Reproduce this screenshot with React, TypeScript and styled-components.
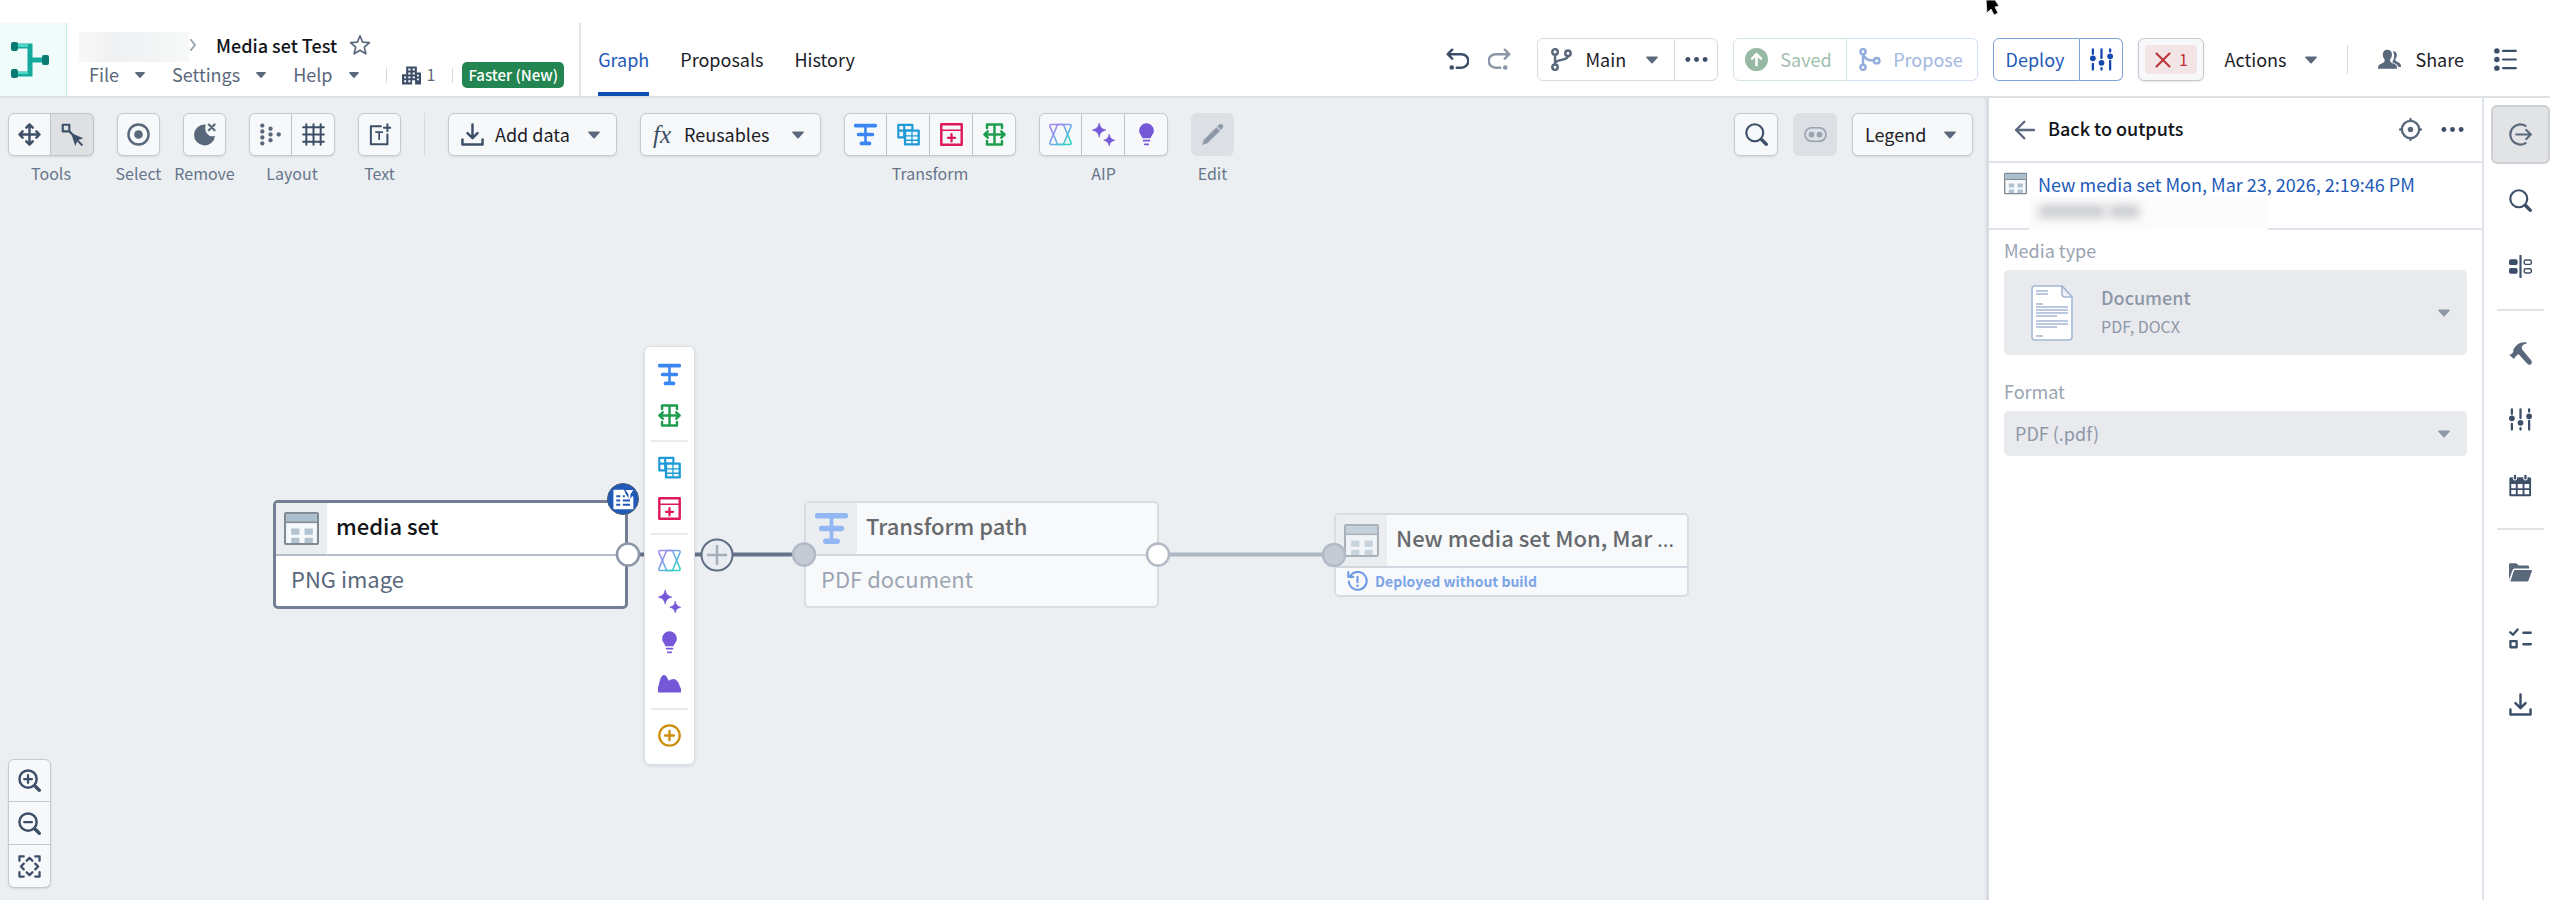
import React from "react";
import styled, { createGlobalStyle, css } from "styled-components";

const ink = "#5a687c";
const navy = "#3d4f68";
const blue = "#2159b8";

const GlobalStyle = createGlobalStyle`
  *, *::before, *::after { box-sizing: border-box; }
  body {
    margin: 0;
    background: #ffffff;
    color: #1c2127;
    font-family: "Noto Sans CJK SC", "Open Sans", sans-serif;
    font-size: 18px;
    line-height: 24px;
  }
  button, select { font: inherit; color: inherit; margin: 0; cursor: pointer; }
  button:disabled, select:disabled { cursor: default; }
  svg { display: block; flex: none; }
`;

/* ---------- icons ---------- */

type IconProps = { size?: number; color?: string; children?: React.ReactNode };

const Icon = ({ size = 23, color = ink, children }: IconProps) => (
  <svg width={size} height={size} viewBox="0 0 16 16" fill="none" color={color} stroke="currentColor" strokeWidth="1.7" strokeLinecap="round" strokeLinejoin="round" aria-hidden="true">
    {children}
  </svg>
);

const fillOnly = { fill: "currentColor", stroke: "none" };

const Caret = ({ color = ink, size = 12 }: { color?: string; size?: number }) => (
  <svg width={size} height="8" viewBox="0 0 12 8" fill={color} aria-hidden="true">
    <path d="M.9.5h10.2c.7 0 1 .8.5 1.300L6.600 7.200a.9.9 0 0 1-1.200 0L.4 1.800C-.1 1.300.2.5.9.5z" />
  </svg>
);

const MoveIcon = () => (
  <Icon color={navy}><path d="M8 1.200v13.600M1.200 8h13.600M5.800 3.200L8 1l2.200 2.200M5.800 12.800L8 15l2.200-2.200M3.200 5.800L1 8l2.200 2.200M12.800 5.800L15 8l-2.200 2.200" /></Icon>
);
const SelectToolIcon = () => (
  <Icon color={navy}><path d="M1.200 1.200h4.600v4.600H1.200zM6 6l3 3" strokeWidth="1.500" /><path d="M7 7l8.500 3.600-3.400 1.300 3.300 3.200-1 1-3.200-3.200L9.900 16z" {...fillOnly} /></Icon>
);
const SelectIcon = () => (
  <Icon><circle cx="8" cy="8" r="7" /><circle cx="8" cy="8" r="3" {...fillOnly} /></Icon>
);
const RemoveIcon = () => (
  <Icon><path d="M8 1a7.300 7.300 0 1 0 7.300 7.800c-1.600.7-3.400.6-4.700-.6C8.500 6.400 8 3.500 9 1.100A7 7 0 0 0 8 1z" {...fillOnly} /><path d="M11 1l4 4M15 1l-4 4" strokeWidth="1.500" /></Icon>
);
const LayoutIcon = () => (
  <Icon><g {...fillOnly}>
    {[[2.300, 1.800], [2.300, 5.900], [2.300, 10.100], [2.300, 14.200], [8, 4], [8, 8], [8, 12], [13.700, 8]].map(([x, y]) => <circle key={`${x}-${y}`} cx={x} cy={y} r="1.500" />)}
  </g></Icon>
);
const GridIcon = () => (
  <Icon color={navy}><path d="M3 .8v14.400M8 .8v14.400M13 .8v14.400M.8 3h14.400M.8 8h14.400M.8 13h14.400" strokeWidth="1.400" /></Icon>
);
const TextIcon = () => (
  <Icon color={navy}><path d="M9 2.300H2v12.400h11.500V8M13.500.8v5M11 3.300h5" strokeWidth="1.400" /><path d="M5.500 6.300h4.500M7.750 6.300v5" strokeWidth="1.200" /></Icon>
);
const ImportIcon = ({ size = 23 }: { size?: number }) => (
  <Icon size={size} color={navy}><path d="M8 1v9M4.500 7L8 10.500 11.500 7M1 11.500V15h14v-3.500" strokeWidth="1.700" /></Icon>
);
const TransformIcon = ({ size = 23, color = "#3a86f2" }: { size?: number; color?: string }) => (
  <Icon size={size} color={color}><path d="M1.200 1.800h13.600M3.200 8h9.600M5.200 14.200h5.600" strokeWidth="2.600" /><path d="M8 2v12" strokeWidth="1.800" /></Icon>
);
const JoinIcon = () => (
  <Icon color="#1e9bd7"><path d="M.9 1.300h9.800v8.700H.9zM.9 5.300h9.800M5 1.300v8.700" strokeWidth="1.500" /><path d="M5.600 5.300h9.500v9.600H5.600z" fill="#f7fafc" strokeWidth="1.600" /><path d="M5.600 9h9.500M10.400 5.300v9.600M5.600 12h9.500" strokeWidth=".9" /></Icon>
);
const AddTableIcon = () => (
  <Icon color="#dc1a5c"><path d="M.9.9h14.200v14.200H.9z" strokeWidth="1.700" /><path d="M1 5h14" strokeWidth="1" /><path d="M8 7.800v5M5.500 10.300h5" strokeWidth="1.600" /></Icon>
);
const SplitIcon = () => (
  <Icon color="#1f9d4f"><path d="M2.800 3.500V1h10.400v2.500M2.800 12.500V15h10.400v-2.500M8 1v14M1 8h14M3.300 5.800L1 8l2.300 2.200M12.700 5.800L15 8l-2.300 2.200" strokeWidth="1.700" /></Icon>
);
const AipIcon = ({ id }: { id: string }) => (
  <Icon>
    <defs><linearGradient id={id} x1="0" y1="0" x2="1" y2="1"><stop offset="0.200" stopColor="#9a8cf2" /><stop offset="0.500" stopColor="#6fa8ea" /><stop offset="0.850" stopColor="#35cfc4" /></linearGradient></defs>
    <g stroke={`url(#${id})`} strokeWidth="1.100">
      <path d="M1.800 1h8.200l5.300 12.500c.3.900-.2 1.500-1.100 1.500H6L.7 2.500C.4 1.600.9 1 1.800 1z" />
      <path d="M14.200 1H6L.7 13.500c-.3.900.2 1.500 1.100 1.500H10l5.300-12.500c.3-.9-.2-1.500-1.100-1.500z" />
    </g>
  </Icon>
);
const SparkleIcon = () => (
  <Icon color="#7458d8"><path d="M5 0c.6 3 1.700 4.100 4.600 4.900C6.700 5.700 5.600 6.800 5 9.800 4.400 6.800 3.200 5.700.3 4.900 3.200 4.100 4.400 3 5 0zM12 8c.5 2.400 1.400 3.300 3.800 4-2.400.6-3.300 1.500-3.800 3.900-.5-2.400-1.400-3.300-3.800-3.900C10.600 11.300 11.500 10.400 12 8z" fill="currentColor" strokeWidth=".5" /></Icon>
);
const BulbIcon = () => (
  <Icon color="#7458d8"><path d="M8 .2a5.100 5.100 0 0 0-5.100 5.200c0 2.400 2 3.400 2.200 5.200h5.800c.2-1.800 2.200-2.800 2.200-5.200A5.100 5.100 0 0 0 8 .2z" {...fillOnly} /><path d="M6 12.300h4M6.800 14.800h2.400" strokeWidth="1.200" /></Icon>
);
const AreaIcon = () => (
  <Icon color="#7458d8"><path d="M0 14.200V11c1-3 1.300-7.500 3.500-8.700 2-.8 2.800 1.800 4 3.700 1.500-.7 3.500-1.800 5.300-.3C14.800 7.400 15 10 16 11.500v2.700z" {...fillOnly} /></Icon>
);
const AddCircleIcon = () => (
  <Icon color="#cc8f0b"><circle cx="8" cy="8" r="7.100" strokeWidth="1.600" /><path d="M8 4.900v6.200M4.900 8h6.200" /></Icon>
);
const EditIcon = () => (
  <Icon color="#8d97a7"><path d="M10.700 3.300l2.300 2.200L4.500 13.800 1 15l1.300-3.400zM11.600 2.300c1.300-1.500 2.300-1.900 3.200-1s.5 2-.9 3.300z" fill="currentColor" strokeWidth=".4" /></Icon>
);
const SearchIcon = () => (
  <Icon color={navy}><circle cx="6.800" cy="6.800" r="5.900" strokeWidth="1.500" /><path d="M11.500 11.500l3.300 3.300" strokeWidth="2.300" /></Icon>
);
const ZoomIcon = ({ plus }: { plus?: boolean }) => (
  <Icon color={navy}><circle cx="7" cy="7" r="6" strokeWidth="1.700" /><path d={plus ? "M7 4.300v5.400M4.300 7h5.400" : "M4.300 7h5.400"} strokeWidth="1.600" /><path d="M11.800 11.800l3 3" strokeWidth="2.300" /></Icon>
);
const FitIcon = () => (
  <Icon color={navy}><path d="M1 4V1h3M12 1h3v3M15 12v3h-3M4 15H1v-3M6 4l2-2 2 2M6 12l2 2 2-2M4 6L2 8l2 2M12 6l2 2-2 2" strokeWidth="1.600" /></Icon>
);
const RobotIcon = () => (
  <Icon color="#98a2b1"><rect x=".7" y="3.300" width="14.600" height="9.400" rx="4.700" strokeWidth="1.200" /><circle cx="5.200" cy="8" r="2" {...fillOnly} /><circle cx="10.800" cy="8" r="2" {...fillOnly} /></Icon>
);
const UndoIcon = () => (
  <Icon color={navy}><path d="M4.300 1.200L1.200 4.300l3.100 3.100M1.500 4.300h9.300a4.100 4.100 0 0 1 0 9.400H7.500" /><circle cx="4" cy="13.600" r="1.600" {...fillOnly} /></Icon>
);
const RedoIcon = () => (
  <Icon color="#8d97a7"><path d="M11.700 1.200l3.100 3.100-3.100 3.100M14.500 4.300H5.200a4.100 4.100 0 0 0 0 9.400h3.300" /><circle cx="12" cy="13.600" r="1.600" {...fillOnly} /></Icon>
);
const BranchIcon = () => (
  <Icon><circle cx="3.500" cy="2.700" r="1.900" /><circle cx="3.500" cy="13.300" r="1.900" /><circle cx="12.500" cy="3.700" r="1.900" /><path d="M3.500 4.600v6.800M12.500 5.600C12.500 9.500 3.500 7 3.500 11" /></Icon>
);
const ProposeIcon = () => (
  <Icon color="#93aedd"><circle cx="3.500" cy="2.600" r="1.800" /><circle cx="3.500" cy="13.400" r="1.800" /><circle cx="13" cy="8.800" r="1.900" /><path d="M3.500 4.600v6.800M3.700 4.600C4.500 7.500 7 8.800 11 8.800" /></Icon>
);
const SavedIcon = () => (
  <Icon color="#97b8a4"><circle cx="8" cy="8" r="8" {...fillOnly} /><path d="M8 12V4.500M4.900 7.400L8 4.300l3.100 3.100" stroke="#fff" strokeWidth="1.800" /></Icon>
);
const DotsIcon = () => (
  <Icon color={navy}><g {...fillOnly}><circle cx="2" cy="8" r="1.700" /><circle cx="8" cy="8" r="1.700" /><circle cx="14" cy="8" r="1.700" /></g></Icon>
);
const SlidersIcon = ({ color = navy }: { color?: string }) => (
  <Icon color={color}><path d="M2 1v3M2 11v4M8 1v6M8 14v1M14 1v1.500M14 9v6" strokeWidth="1.600" /><g {...fillOnly}><circle cx="2" cy="7.200" r="2" /><circle cx="8" cy="10.300" r="2" /><circle cx="14" cy="5.800" r="2" /></g></Icon>
);
const CrossIcon = () => (
  <Icon size={16} color="#bd3038"><path d="M1.500 1.500l13 13M14.500 1.500l-13 13" strokeWidth="2" /></Icon>
);
const PeopleIcon = () => (
  <Icon><path d="M6.500 1.200c2 0 3.200 1.400 3.200 3.300 0 1.500-.6 2.700-1.300 3.500v1.300c.4 1.200 4 1.700 4.600 3.300.2.700.2 1.400.2 1.900H0c0-.5 0-1.200.3-1.900.6-1.600 4-2.100 4.300-3.300V8C4 7.200 3.300 6 3.300 4.500c0-1.900 1.200-3.300 3.200-3.300z" {...fillOnly} /><path d="M10.300 2.300c1.800-.1 2.800 1 2.800 2.600 0 1.100-.4 2-1 2.700v1c.3.900 3.200 1.600 3.700 2.900.2.500.2 1.200.2 1.700h-1.700c-.6-1.700-3-2.500-4.400-3.400.8-1.100 1.300-2.400 1.300-4.200 0-1.200-.3-2.400-.9-3.300z" {...fillOnly} /></Icon>
);
const ListIcon = () => (
  <Icon color={navy}><path d="M6.300 2h8.900M6.300 8h8.900M6.300 14h8.900" strokeWidth="1.500" /><g {...fillOnly}><circle cx="2" cy="2" r="1.900" /><circle cx="2" cy="8" r="1.900" /><circle cx="2" cy="14" r="1.900" /></g></Icon>
);
const StarIcon = () => (
  <Icon size={22}><path d="M8 1.300l1.900 4.600 5 .4-3.800 3.200 1.200 4.900L8 11.800l-4.300 2.600 1.200-4.900L1.100 6.300l5-.4z" strokeWidth="1.200" /></Icon>
);
const ChevronIcon = () => (
  <svg width="8" height="12" viewBox="0 0 8 12" fill="none" stroke="#98a4b5" strokeWidth="2" strokeLinecap="round" strokeLinejoin="round" aria-hidden="true"><path d="M2 1l4 5-4 5" /></svg>
);
const BuildingIcon = () => (
  <Icon size={19} color={navy}><path d="M3.500.5h9v5H16v10h-5V12H8.500v3.500H0V7h3.500z" {...fillOnly} /><g fill="#fff" stroke="none"><path d="M5.300 2.200h1.800v1.600H5.300zM9 2.200h1.800v1.600H9zM5.300 5.500h1.800v1.600H5.300zM9 5.500h1.800v1.600H9zM5.300 8.800h1.800v1.600H5.300zM9 8.800h1.800v1.600H9zM12.600 7.300h1.600v1.600h-1.600zM12.600 10.500h1.600v1.600h-1.600zM1.800 8.800h1.700v1.600H1.800zM1.800 12h1.700v1.600H1.800zM5.300 12h1.800v1.600H5.300z" /></g></Icon>
);
const BackIcon = () => (
  <Icon size={22} color={ink}><path d="M14.500 8H1.500M7.500 2L1.500 8l6 6" strokeWidth="1.700" /></Icon>
);
const TargetIcon = () => (
  <Icon><circle cx="8" cy="8" r="6" strokeWidth="1.600" /><circle cx="8" cy="8" r="1.900" {...fillOnly} /><path d="M8 .8V2M8 14v1.200M.8 8H2M14 8h1.200" /></Icon>
);
const TableIcon = ({ size = 23, faded }: { size?: number; faded?: boolean }) => (
  <svg width={size} height={size} viewBox="0 0 34 34" opacity={faded ? 0.6 : 1} aria-hidden="true">
    <rect x="1" y="2" width="32" height="30" rx="1" fill="#f5f9fc" stroke="#7f8a94" strokeWidth="2" />
    <path d="M2 3h30v8H2z" fill="#abbecb" /><path d="M2 11h30" stroke="#7f8a94" strokeWidth="1.500" />
    <path d="M7 17h8v6H7zM20 17h8v6h-8zM7 26h8v5H7zM20 26h8v5h-8z" fill="#b2c2cf" />
  </svg>
);
const OutputIcon = () => (
  <Icon><path d="M11.500 2A7 7 0 1 0 11.500 14M5 8h10M12 4.800L15.200 8 12 11.200" strokeWidth="1.500" /></Icon>
);
const CompareIcon = () => (
  <Icon color={navy}><path d="M8 .5v15" strokeWidth="1.500" /><rect x="0" y="3" width="6" height="4" rx="1.300" {...fillOnly} /><rect x="0" y="9" width="6" height="4" rx="1.300" {...fillOnly} /><rect x="10.600" y="3.500" width="4.900" height="3" rx="1" strokeWidth="1" /><rect x="10.600" y="9.500" width="4.900" height="3" rx="1" strokeWidth="1" /></Icon>
);
const HammerIcon = () => (
  <Icon><path d="M3.800 4C5.800 1.200 8.500 0 12.300.3c.2.500 0 .8-.6.9-1.700.4-2.800 1.300-2.900 2.600 0 .7.300 1.300.8 1.900l5.800 7c.8 1 .6 2.100-.1 2.700-.8.700-2 .5-2.700-.4L6.500 8.300 3.900 10.700c.1.500-.1.900-.5 1.200L.2 8.900c.3-.4.800-.5 1.300-.4L3 7c-.2-1.200.1-2.100.8-3z" {...fillOnly} /></Icon>
);
const CalendarIcon = () => (
  <Icon color={navy}><path d="M.9 3h13.800v11.800H.9zM1 6.300h13.600M1 10.500h13.600M5.400 6.300v8.500M10.100 6.300v8.500" strokeWidth="1.300" /><path d="M1 2.500h13.500v4H1z" {...fillOnly} /><g fill="currentColor" stroke="#fff" strokeWidth=".7"><rect x="3" y=".2" width="2.300" height="4" rx="1.100" /><rect x="10.300" y=".2" width="2.300" height="4" rx="1.100" /></g></Icon>
);
const FolderIcon = () => (
  <Icon><path d="M0 13V2.500C0 1.900.5 1.500 1 1.500h4L6.800 3.200H13c.6 0 1 .4 1 1v1H4.200c-.8 0-1.400.4-1.700 1.100z" {...fillOnly} /><path d="M4.200 6.300h11.200c.5 0 .7.400.5.900l-2.300 6.200c-.2.500-.6.900-1.200.9H.9l2.400-7.300c.1-.5.400-.7.900-.7z" {...fillOnly} /></Icon>
);
const ChecklistIcon = () => (
  <Icon color={navy}><path d="M.9 3.700l1.900 1.700L6 1.800M10 4h5.200M10 12h5.200M1 9.800h4.300v4.300H1z" strokeWidth="1.600" /></Icon>
);
const FilterDocIcon = () => (
  <Icon size={21} color="#fff"><path d="M.8 1h7.200l1.500 3.500L11 6.500V8h2.200l1.800-2v9H.8z" fill="#fff" strokeWidth="1" /><path d="M9.500.8h6L13.300 4v3l-1.500 1V4z" {...fillOnly} /><path d="M2.500 5.500h3M7.500 5.500h1.500M2.500 8.800h3M7.500 8.800h5.500M2.500 12h3M7.500 12h5.500" stroke={blue} strokeWidth="1.500" strokeLinecap="butt" /></Icon>
);
const DeployedIcon = () => (
  <Icon size={21} color="#6f9be6"><path d="M2.800 3.300A6.800 6.800 0 1 1 1.400 8M1 .8v3.700h3.700M8 4.500V8.500" strokeWidth="1.600" /><circle cx="8" cy="11.300" r="1" {...fillOnly} /></Icon>
);
const DocumentArt = () => (
  <svg width="42" height="56" viewBox="0 0 42 56" fill="#fff" stroke="#a5b8d6" strokeWidth="1.600" aria-hidden="true">
    <path d="M4 1h27l10 11v40a3 3 0 0 1-3 3H4a3 3 0 0 1-3-3V4a3 3 0 0 1 3-3z" />
    <path d="M31 1v8c0 2 1 3 3 3h7z" fill="#eef2f8" />
    <path d="M5 6h12M5 9h12M5 19h7M5 22h32M5 25h32M5 28h32M5 31h21M5 36h32M5 39h32M5 42h21M5 51h7" />
  </svg>
);

/* ---------- shared controls ---------- */

const Button = styled.button<{ $w?: number; $tone?: "plain" | "active" | "disabled" }>`
  display: flex;
  align-items: center;
  justify-content: center;
  width: ${(p) => p.$w ?? 43}px;
  height: 43px;
  padding: 0 16px 0 12px;
  border: 1px solid #c5c9cf;
  border-radius: 6px;
  background: #f7f8f9;
  box-shadow: 0 1px 2px rgba(17, 20, 24, 0.1);
  ${(p) => (p.$w ?? 43) < 80 && css`padding: 0;`}
  ${(p) => p.$tone === "active" && css`background: #dfe0e2; border-color: #c0c3c7;`}
  ${(p) => p.$tone === "disabled" && css`background: #dcdfe4; border-color: #dcdfe4; box-shadow: none;`}
`;

const ButtonGroup = styled.div<{ $vertical?: boolean }>`
  display: flex;
  flex-direction: ${(p) => (p.$vertical ? "column" : "row")};
  ${Button} + ${Button} {
    ${(p) => (p.$vertical ? "border-top: 0;" : "border-left: 0;")}
  }
  ${Button}:not(:first-child) {
    border-top-left-radius: 0;
    ${(p) => (p.$vertical ? "border-top-right-radius: 0;" : "border-bottom-left-radius: 0;")}
  }
  ${Button}:not(:last-child) {
    border-bottom-right-radius: 0;
    ${(p) => (p.$vertical ? "border-bottom-left-radius: 0;" : "border-top-right-radius: 0;")}
  }
`;

const HeaderButton = styled(Button)<{ $line?: string; $ink?: string }>`
  background: #ffffff;
  box-shadow: none;
  border-color: ${(p) => p.$line ?? "#d8dbe1"};
  color: ${(p) => p.$ink ?? "inherit"};
`;

const BareButton = styled.button<{ $gap?: number; $ink?: string }>`
  display: flex;
  align-items: center;
  gap: ${(p) => p.$gap ?? 0}px;
  padding: 0;
  border: 0;
  background: none;
  color: ${(p) => p.$ink ?? "inherit"};
`;

/* Text of a control; the face sits low in its line box, so it is lifted to the icon's centre line. */
const Text = styled.span<{ $l?: number; $fill?: boolean }>`
  padding-bottom: 2px;
  margin-left: ${(p) => p.$l ?? 0}px;
  margin-right: ${(p) => (p.$fill ? "auto" : "0")};
`;

const Rule = styled.span<{ $h: number }>`
  flex: none;
  width: 1px;
  height: ${(p) => p.$h}px;
  background: #d5dae0;
`;

/* ---------- page frame ---------- */

const Page = styled.div`
  display: flex;
  flex-direction: column;
  min-height: 100vh;
`;

const Header = styled.header`
  display: flex;
  align-items: stretch;
  padding-top: 23px;
  border-bottom: 2px solid #dce1e6;
`;

const LogoCell = styled.div`
  display: flex;
  align-items: center;
  width: 67px;
  padding-left: 11px;
  background: #effcfa;
  border-right: 1px solid #c3eee9;
`;

const TitleBlock = styled.div`
  padding: 9px 15px 8px 12px;
  border-right: 2px solid #e0e3e8;
`;

const Breadcrumb = styled.div`
  display: flex;
  align-items: center;
  height: 30px;
`;

const Redaction = styled.span`
  width: 110px;
  height: 30px;
  background: linear-gradient(90deg, #f8f8f9, #f0f1f2 30%, #f3f4f5 70%, #f8f9f9);
`;

const Title = styled.h1`
  margin: 0 12px 4px 19px;
  font-size: 18px;
  line-height: 24px;
  font-weight: 500;
  color: #111418;
`;

const Crumb = styled.span`
  display: flex;
  padding-bottom: 4px;
`;

const MenuRow = styled.div`
  display: flex;
  align-items: center;
  height: 26px;
  padding-left: 10px;
  color: ${ink};
`;

const Menu = styled(BareButton)`
  gap: 16px;
  margin-right: 27px;
`;

const Instances = styled.span`
  display: flex;
  align-items: center;
  gap: 6px;
  margin: 0 17px 0 15px;
  font-size: 16px;
`;

const Tag = styled.span`
  margin-left: 9px;
  padding: 0 6px;
  border-radius: 5px;
  background: #238551;
  color: #ffffff;
  font-size: 15px;
  line-height: 26px;
  font-weight: 500;
`;

const Tabs = styled.nav`
  display: flex;
  gap: 31px;
  padding-left: 17px;
`;

const Tab = styled.a<{ $on?: boolean }>`
  display: flex;
  align-items: center;
  padding-top: 2px;
  border-bottom: 4px solid ${(p) => (p.$on ? "#0f4fb3" : "transparent")};
  color: ${(p) => (p.$on ? blue : "#1c2127")};
  text-decoration: none;
`;

const HeaderTools = styled.div`
  display: flex;
  align-items: center;
  margin-left: auto;
  padding-right: 33px;
  gap: 15px;
`;

const History = styled.div`
  display: flex;
  gap: 19px;
  margin-right: 11px;
`;

const ErrorTag = styled.span`
  display: flex;
  align-items: center;
  justify-content: center;
  gap: 8px;
  width: 52px;
  height: 29px;
  flex: none;
  border-radius: 4px;
  background: #f3e4e6;
  color: #bd3038;
  font-size: 16px;
`;

const Account = styled.div`
  display: flex;
  align-items: center;
  gap: 30px;
  padding-left: 5px;
`;

const Body = styled.div`
  display: flex;
  flex: 1;
  align-items: stretch;
`;

/* ---------- canvas ---------- */

const Canvas = styled.main`
  position: relative;
  flex: 1;
  min-width: 0;
  background: #ebeff2;
  box-shadow: inset -4px 0 3px -2px #d4d9df;
`;

const Toolbar = styled.div`
  display: flex;
  align-items: flex-start;
  gap: 23px;
  padding: 15px 15px 0 8px;
`;

const ToolGroup = styled.div`
  display: grid;
`;

const ToolLabel = styled.span`
  margin: 6px -20px 0;
  text-align: center;
  font-size: 16px;
  line-height: 22px;
  color: #67758a;
`;

const ViewTools = styled.div`
  display: flex;
  gap: 15px;
  margin-left: auto;
`;

const Fx = styled.span`
  font-family: "Liberation Serif", serif;
  font-style: italic;
  font-size: 25px;
  color: ${navy};
`;

const ZoomControls = styled.div`
  position: absolute;
  left: 8px;
  bottom: 12px;
`;

const Edges = styled.svg`
  position: absolute;
  left: 0;
  top: 0;
`;

const Node = styled.article<{ $x: number; $y: number; $on?: boolean }>`
  position: absolute;
  left: ${(p) => p.$x}px;
  top: ${(p) => p.$y}px;
  width: 355px;
  border: ${(p) => (p.$on ? "3px solid #738094" : "2px solid #d8dce3")};
  border-radius: 5px;
  background: ${(p) => (p.$on ? "#ffffff" : "#f8f9fb")};
  color: ${(p) => (p.$on ? "#111418" : "#66696d")};
`;

const NodeHead = styled.div<{ $on?: boolean }>`
  display: flex;
  align-items: center;
  height: 53px;
  border-bottom: 2px solid ${(p) => (p.$on ? "#b3bccb" : "#d2d7df")};
`;

const NodeIcon = styled.div`
  display: flex;
  align-items: center;
  justify-content: center;
  flex: none;
  width: 51px;
  height: 51px;
  background: #ebeef1;
`;

const NodeTitle = styled.h2`
  margin: 0;
  padding: 0 0 7px 9px;
  font-size: 22px;
  line-height: 32px;
  font-weight: 500;
  white-space: nowrap;
`;

const Ellipsis = styled.span`
  font-family: "Open Sans", sans-serif;
`;

const NodeText = styled.p<{ $on?: boolean }>`
  margin: 0;
  padding: 6px 15px 12px;
  font-size: 22px;
  line-height: 32px;
  color: ${(p) => (p.$on ? ink : "#9ca5b3")};
`;

const NodeStatus = styled.p`
  display: flex;
  align-items: center;
  gap: 7px;
  height: 27px;
  margin: 0;
  padding-left: 11px;
  font-size: 14px;
  font-weight: 700;
  color: #7ba5e8;
`;

const Badge = styled.span`
  position: absolute;
  top: -20px;
  right: -14px;
  display: flex;
  align-items: center;
  justify-content: center;
  width: 32px;
  height: 32px;
  border: 1px solid #4a5b75;
  border-radius: 50%;
  background: ${blue};
`;

const Palette = styled.div`
  position: absolute;
  left: 645px;
  top: 249px;
  display: flex;
  flex-direction: column;
  align-items: center;
  width: 49px;
  padding: 7px 0 8px;
  border-radius: 5px;
  background: #ffffff;
  box-shadow: 0 0 0 1px #dadee3, 0 1px 4px rgba(17, 20, 24, 0.16);
`;

const PaletteButton = styled(BareButton)`
  justify-content: center;
  width: 40px;
  height: 41px;
`;

const PaletteRule = styled.span`
  width: 37px;
  height: 2px;
  margin: 4px 0 5px;
  background: #e8eaed;
`;

/* ---------- outputs panel ---------- */

const Panel = styled.aside`
  flex: none;
  width: 496px;
  border-right: 2px solid #e0e3e9;
  border-left: 1px solid #d8dce2;
`;

const PanelHead = styled.div`
  display: flex;
  align-items: center;
  height: 65px;
  padding: 0 18px 0 25px;
  border-bottom: 2px solid #e0e3e9;
`;

const PanelTitle = styled.h2`
  margin: 0 auto 0 12px;
  padding-bottom: 3px;
  font-size: 18px;
  line-height: 24px;
  font-weight: 500;
  color: #111418;
`;

const PanelActions = styled.div`
  display: flex;
  gap: 19px;
`;

const Resource = styled.div`
  display: flex;
  align-items: flex-start;
  gap: 11px;
  height: 67px;
  padding: 9px 15px 0;
  border-bottom: 2px solid #e0e3e9;
`;

const ResourceLink = styled.a`
  display: block;
  color: ${blue};
  text-decoration: none;
`;

const ResourcePath = styled.span`
  display: flex;
  align-items: center;
  gap: 4px;
  width: 239px;
  height: 34px;
  margin-left: -9px;
  padding: 0 0 3px 10px;
  background: #fcfcfc;
`;

const Smudge = styled.span<{ $w: number }>`
  width: ${(p) => p.$w}px;
  height: 13px;
  background: #c9cbcf;
  filter: blur(5px);
`;

const Fields = styled.div`
  display: grid;
  padding: 8px 15px;
  color: #9aa3b1;
`;

const FieldLabel = styled.label`
  line-height: 24px;
  margin-bottom: 8px;
`;

const MediaType = styled.button`
  display: flex;
  align-items: center;
  height: 85px;
  margin-bottom: 24px;
  padding: 0 17px 0 27px;
  border: 0;
  border-radius: 5px;
  background: #e8eaee;
  text-align: left;
  color: #8d97a7;
`;

const MediaText = styled.span`
  display: grid;
  gap: 5px;
  margin: 0 auto 0 28px;
  padding-bottom: 3px;
  font-weight: 500;
`;

const MediaFormats = styled.small`
  font-size: 16px;
  line-height: 24px;
  font-weight: 400;
`;

const SelectBox = styled.div`
  display: grid;
  align-items: center;
  > * { grid-area: 1 / 1; }
  > svg { justify-self: end; margin-right: 17px; }
`;

const Select = styled.select`
  appearance: none;
  width: 100%;
  height: 45px;
  padding: 0 11px 2px;
  border: 0;
  border-radius: 5px;
  background: #e8eaee;
  color: #8d97a7;
  opacity: 1;
`;

/* ---------- right rail ---------- */

const Rail = styled.nav`
  display: flex;
  flex: none;
  flex-direction: column;
  width: 66px;
  padding: 7px 0 0 7px;
  gap: 7px;
`;

const RailButton = styled.button<{ $on?: boolean }>`
  display: flex;
  align-items: center;
  justify-content: center;
  width: 59px;
  height: 59px;
  padding: 0;
  border: 2px solid ${(p) => (p.$on ? "#cdd0d4" : "transparent")};
  border-radius: 6px;
  background: ${(p) => (p.$on ? "#e2e3e4" : "none")};
`;

const RailRule = styled.span`
  width: 47px;
  height: 2px;
  margin: 6px;
  background: #e1e3e6;
`;

const Pointer = styled.svg`
  position: absolute;
  top: 0;
  left: 77.9%;
`;

const Logo = () => (
  <svg width="38" height="36" viewBox="0 0 38 36" aria-label="Pipeline Builder">
    <path d="M4 4h15v28H4M19 18h16" fill="none" stroke="#13a99d" strokeWidth="5" />
    <path d="M5 2h12v3H5zM5 30h12v2H5z" fill="#4fd6c8" />
    <rect x="0" y="0" width="7" height="9" rx="2" fill="#087a72" />
    <rect x="0" y="27" width="7" height="9" rx="2" fill="#087a72" />
    <rect x="31" y="13" width="7" height="10" rx="2" fill="#087a72" />
  </svg>
);

const EdgeLayer = () => (
  <Edges width="1700" height="560" viewBox="0 0 1700 560" fill="none" aria-hidden="true">
    <path d="M628 456.500h176" stroke="#657287" strokeWidth="4" />
    <path d="M1158 456.500h176" stroke="#aeb6c2" strokeWidth="4" />
  </Edges>
);

const PortLayer = () => (
  <Edges width="1700" height="560" viewBox="0 0 1700 560" fill="none" pointerEvents="none" aria-hidden="true">
    <circle cx="628" cy="456.500" r="11" fill="#fff" stroke="#8b96a7" strokeWidth="2.500" />
    <circle cx="717" cy="457" r="15.500" fill="#e9edf1" stroke="#5f6d82" strokeWidth="2" />
    <path d="M717 447v20M707 457h20" stroke="#a5aebc" strokeWidth="2.500" />
    <circle cx="804" cy="456.500" r="11" fill="#c5cbd5" stroke="#b3bac6" strokeWidth="2.500" />
    <circle cx="1158" cy="456.500" r="11" fill="#fff" stroke="#b3bac6" strokeWidth="2.500" />
    <circle cx="1334" cy="457" r="11" fill="#c5cbd5" stroke="#b3bac6" strokeWidth="2.500" />
  </Edges>
);

type Tool = { name: string; icon: React.ReactNode; tone?: "active" | "disabled" };

const Tools = ({ label, items }: { label: string; items: Tool[] }) => (
  <ToolGroup>
    <ButtonGroup>
      {items.map((t) => (
        <Button key={t.name} aria-label={t.name} $tone={t.tone} disabled={t.tone === "disabled"}>{t.icon}</Button>
      ))}
    </ButtonGroup>
    <ToolLabel>{label}</ToolLabel>
  </ToolGroup>
);

export default function App() {
  return (
    <Page>
      <GlobalStyle />
      <Header>
        <LogoCell><Logo /></LogoCell>
        <TitleBlock>
          <Breadcrumb>
            <Redaction />
            <Crumb><ChevronIcon /></Crumb>
            <Title>Media set Test</Title>
            <Crumb><BareButton aria-label="Favorite"><StarIcon /></BareButton></Crumb>
          </Breadcrumb>
          <MenuRow>
            {["File", "Settings", "Help"].map((m) => <Menu key={m}><Text>{m}</Text><Caret size={10} /></Menu>)}
            <Rule $h={15} />
            <Instances><BuildingIcon /><Text>1</Text></Instances>
            <Rule $h={15} />
            <Tag>Faster (New)</Tag>
          </MenuRow>
        </TitleBlock>
        <Tabs>
          <Tab href="#graph" $on>Graph</Tab>
          <Tab href="#proposals">Proposals</Tab>
          <Tab href="#history">History</Tab>
        </Tabs>
        <HeaderTools>
          <History>
            <BareButton aria-label="Undo"><UndoIcon /></BareButton>
            <BareButton aria-label="Redo"><RedoIcon /></BareButton>
          </History>
          <ButtonGroup>
            <HeaderButton $w={138}><BranchIcon /><Text $l={12} $fill>Main</Text><Caret /></HeaderButton>
            <HeaderButton $w={43} aria-label="Branch options"><DotsIcon /></HeaderButton>
          </ButtonGroup>
          <ButtonGroup>
            <HeaderButton $w={114} $line="#d3e4da" $ink="#a1c0ad" disabled><SavedIcon /><Text $l={12} $fill>Saved</Text></HeaderButton>
            <HeaderButton $w={131} $line="#d3dff2" $ink="#a0b8e2" disabled><ProposeIcon /><Text $l={12} $fill>Propose</Text></HeaderButton>
          </ButtonGroup>
          <ButtonGroup>
            <HeaderButton $w={87} $line="#7fa2dc" $ink={blue}><Text>Deploy</Text></HeaderButton>
            <HeaderButton $w={43} $line="#7fa2dc" aria-label="Deploy settings"><SlidersIcon color="#1549b0" /></HeaderButton>
          </ButtonGroup>
          <Button $w={66} aria-label="1 error"><ErrorTag><CrossIcon /><Text>1</Text></ErrorTag></Button>
          <Account>
            <BareButton $gap={19}><Text>Actions</Text><Caret /></BareButton>
            <Rule $h={29} />
            <BareButton $gap={14}><PeopleIcon /><Text>Share</Text></BareButton>
            <BareButton aria-label="Menu"><ListIcon /></BareButton>
          </Account>
        </HeaderTools>
      </Header>

      <Body>
        <Canvas>
          <Toolbar>
            <Tools label="Tools" items={[{ name: "Pan", icon: <MoveIcon /> }, { name: "Select area", icon: <SelectToolIcon />, tone: "active" }]} />
            <Tools label="Select" items={[{ name: "Select", icon: <SelectIcon /> }]} />
            <Tools label="Remove" items={[{ name: "Remove", icon: <RemoveIcon /> }]} />
            <Tools label="Layout" items={[{ name: "Auto layout", icon: <LayoutIcon /> }, { name: "Grid", icon: <GridIcon /> }]} />
            <Tools label="Text" items={[{ name: "Text", icon: <TextIcon /> }]} />
            <Rule $h={43} />
            <Button $w={169}><ImportIcon /><Text $l={11} $fill>Add data</Text><Caret /></Button>
            <Button $w={181}><Fx>fx</Fx><Text $l={13} $fill>Reusables</Text><Caret /></Button>
            <Tools
              label="Transform"
              items={[
                { name: "Transform", icon: <TransformIcon /> },
                { name: "Join", icon: <JoinIcon /> },
                { name: "Union", icon: <AddTableIcon /> },
                { name: "Split", icon: <SplitIcon /> },
              ]}
            />
            <Tools
              label="AIP"
              items={[
                { name: "Use LLM", icon: <AipIcon id="aip-toolbar" /> },
                { name: "Generate", icon: <SparkleIcon /> },
                { name: "Explain", icon: <BulbIcon /> },
              ]}
            />
            <Tools label="Edit" items={[{ name: "Edit", icon: <EditIcon />, tone: "disabled" }]} />
            <ViewTools>
              <Button $w={44} aria-label="Search"><SearchIcon /></Button>
              <Button $w={44} $tone="disabled" disabled aria-label="Assistant"><RobotIcon /></Button>
              <Button $w={121}><Text $fill>Legend</Text><Caret /></Button>
            </ViewTools>
          </Toolbar>

          <EdgeLayer />
          <Node $x={273} $y={402} $on>
            <NodeHead $on>
              <NodeIcon><TableIcon size={35} /></NodeIcon>
              <NodeTitle>media set</NodeTitle>
            </NodeHead>
            <NodeText $on>PNG image</NodeText>
            <Badge><FilterDocIcon /></Badge>
          </Node>
          <Node $x={804} $y={403}>
            <NodeHead>
              <NodeIcon><TransformIcon size={33} color="#93b7f2" /></NodeIcon>
              <NodeTitle>Transform path</NodeTitle>
            </NodeHead>
            <NodeText>PDF document</NodeText>
          </Node>
          <Node $x={1334} $y={415}>
            <NodeHead>
              <NodeIcon><TableIcon size={35} faded /></NodeIcon>
              <NodeTitle>New media set Mon, Mar <Ellipsis>…</Ellipsis></NodeTitle>
            </NodeHead>
            <NodeStatus><DeployedIcon /><Text>Deployed without build</Text></NodeStatus>
          </Node>
          <PortLayer />

          <Palette>
            <PaletteButton aria-label="Transform"><TransformIcon /></PaletteButton>
            <PaletteButton aria-label="Split"><SplitIcon /></PaletteButton>
            <PaletteRule />
            <PaletteButton aria-label="Join"><JoinIcon /></PaletteButton>
            <PaletteButton aria-label="Union"><AddTableIcon /></PaletteButton>
            <PaletteRule />
            <PaletteButton aria-label="Use LLM"><AipIcon id="aip-palette" /></PaletteButton>
            <PaletteButton aria-label="Generate"><SparkleIcon /></PaletteButton>
            <PaletteButton aria-label="Explain"><BulbIcon /></PaletteButton>
            <PaletteButton aria-label="Chart"><AreaIcon /></PaletteButton>
            <PaletteRule />
            <PaletteButton aria-label="Add"><AddCircleIcon /></PaletteButton>
          </Palette>

          <ZoomControls>
            <ButtonGroup $vertical>
              <Button aria-label="Zoom in"><ZoomIcon plus /></Button>
              <Button aria-label="Zoom out"><ZoomIcon /></Button>
              <Button aria-label="Zoom to fit"><FitIcon /></Button>
            </ButtonGroup>
          </ZoomControls>
        </Canvas>

        <Panel>
          <PanelHead>
            <BareButton aria-label="Back"><BackIcon /></BareButton>
            <PanelTitle>Back to outputs</PanelTitle>
            <PanelActions>
              <BareButton aria-label="Locate"><TargetIcon /></BareButton>
              <BareButton aria-label="More"><DotsIcon /></BareButton>
            </PanelActions>
          </PanelHead>
          <Resource>
            <TableIcon />
            <div>
              <ResourceLink href="#media-set">New media set Mon, Mar 23, 2026, 2:19:46 PM</ResourceLink>
              <ResourcePath><Smudge $w={66} /><Smudge $w={30} /></ResourcePath>
            </div>
          </Resource>
          <Fields>
            <FieldLabel htmlFor="media-type">Media type</FieldLabel>
            <MediaType id="media-type" disabled aria-haspopup="listbox">
              <DocumentArt />
              <MediaText>Document<MediaFormats>PDF, DOCX</MediaFormats></MediaText>
              <Caret color="#8d97a7" />
            </MediaType>
            <FieldLabel htmlFor="format">Format</FieldLabel>
            <SelectBox>
              <Select id="format" disabled><option>PDF (.pdf)</option></Select>
              <Caret color="#8d97a7" />
            </SelectBox>
          </Fields>
        </Panel>

        <Rail>
          <RailButton $on aria-label="Outputs"><OutputIcon /></RailButton>
          <RailButton aria-label="Search"><SearchIcon /></RailButton>
          <RailButton aria-label="Compare"><CompareIcon /></RailButton>
          <RailRule />
          <RailButton aria-label="Build"><HammerIcon /></RailButton>
          <RailButton aria-label="Settings"><SlidersIcon /></RailButton>
          <RailButton aria-label="Schedules"><CalendarIcon /></RailButton>
          <RailRule />
          <RailButton aria-label="Files"><FolderIcon /></RailButton>
          <RailButton aria-label="Checks"><ChecklistIcon /></RailButton>
          <RailButton aria-label="Download"><ImportIcon /></RailButton>
        </Rail>
      </Body>
      <Pointer width="14" height="17" viewBox="0 0 14 17" aria-hidden="true">
        <path d="M0 0h9l4 6-4 1 3 6-4 2-3-6-4 4z" fill="#000" stroke="#d9d9d9" />
      </Pointer>
    </Page>
  );
}
